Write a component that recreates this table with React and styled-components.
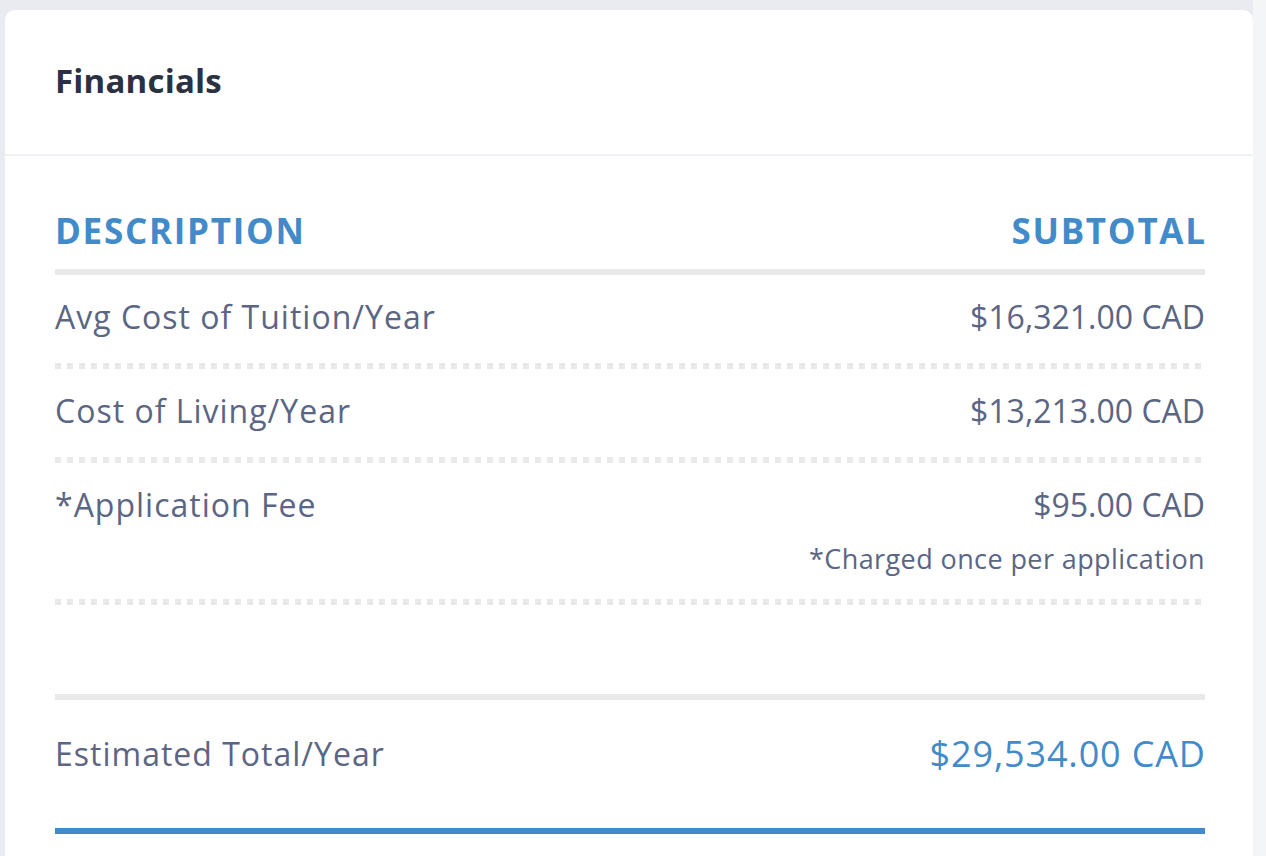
import React from "react";
import styled, { createGlobalStyle } from "styled-components";

const Global = createGlobalStyle`
  html, body { margin: 0; padding: 0; }
  body {
    background: #e9ebf1;
    font-family: "Open Sans", "Noto Sans", sans-serif;
    -webkit-font-smoothing: antialiased;
  }
`;

const Page = styled.div`
  display: flex;
  min-height: 856px;
`;

const Main = styled.div`
  flex: 1;
  padding: 10px 0 0 5px;
`;

const ScrollTrack = styled.div`
  width: 13px;
  flex: none;
  background: #f4f5f7;
`;

const Card = styled.section`
  background: #fff;
  border-radius: 10px 10px 0 0;
  min-height: 846px;
`;

const CardHeader = styled.header`
  padding: 0 50px 4px;
  height: 140px;
  display: flex;
  align-items: center;
  border-bottom: 2px solid #f0f1f4;
`;

const Title = styled.h2`
  margin: 0;
  font-size: 33px;
  font-weight: 700;
  color: #2c3142;
  letter-spacing: 0.2px;
`;

const Body = styled.div`
  padding: 50px 48px 0 50px;
`;

const HeadRow = styled.div`
  display: flex;
  justify-content: space-between;
  align-items: center;
  height: 48px;
  padding-bottom: 15px;
  border-bottom: 6px solid #e9e9e9;
`;

const HeadCell = styled.span`
  font-size: 35px;
  font-weight: 700;
  color: #428bca;
  text-transform: uppercase;
  letter-spacing: 1.7px;
  margin-right: -1.7px;
`;

const Row = styled.div`
  padding: 18px 0 28px;
  background-image: linear-gradient(to right, #e9e9e9 6px, transparent 6px);
  background-size: 12px 6px;
  background-repeat: repeat-x;
  background-position: left bottom;
  display: flex;
  justify-content: space-between;
  align-items: flex-start;
`;

const Label = styled.span`
  font-size: 32px;
  line-height: 48px;
  letter-spacing: 1px;
  color: #5b6584;
`;

const ValueCol = styled.div`
  display: flex;
  flex-direction: column;
  align-items: flex-end;
`;

const Value = styled.span`
  font-size: 32px;
  line-height: 48px;
  color: ${(p) => (p.$accent ? "#428bca" : "#5b6584")};
`;

const Note = styled.span`
  margin-top: 12px;
  font-size: 27px;
  line-height: 36px;
  letter-spacing: 0.4px;
  color: #5b6584;
`;

const Spacer = styled.div`
  height: 89px;
`;

const TotalRow = styled.div`
  border-top: 6px solid #e9e9e9;
  border-bottom: 6px solid #428bca;
  padding: 30px 0 50px;
  display: flex;
  justify-content: space-between;
  align-items: center;
`;

const TotalValue = styled(Value)`
  font-size: 36px;
  letter-spacing: 0.85px;
  margin-right: -0.85px;
`;

const rows = [
  { label: "Avg Cost of Tuition/Year", value: "$16,321.00 CAD" },
  { label: "Cost of Living/Year", value: "$13,213.00 CAD" },
  {
    label: "*Application Fee",
    value: "$95.00 CAD",
    note: "*Charged once per application",
  },
];

export default function App() {
  return (
    <>
      <Global />
      <Page>
        <Main>
          <Card>
            <CardHeader>
              <Title>Financials</Title>
            </CardHeader>
            <Body>
              <HeadRow>
                <HeadCell>Description</HeadCell>
                <HeadCell>Subtotal</HeadCell>
              </HeadRow>
              {rows.map((r) => (
                <Row key={r.label}>
                  <Label>{r.label}</Label>
                  <ValueCol>
                    <Value>{r.value}</Value>
                    {r.note && <Note>{r.note}</Note>}
                  </ValueCol>
                </Row>
              ))}
              <Spacer />
              <TotalRow>
                <Label>Estimated Total/Year</Label>
                <TotalValue $accent>$29,534.00 CAD</TotalValue>
              </TotalRow>
            </Body>
          </Card>
        </Main>
        <ScrollTrack />
      </Page>
    </>
  );
}
